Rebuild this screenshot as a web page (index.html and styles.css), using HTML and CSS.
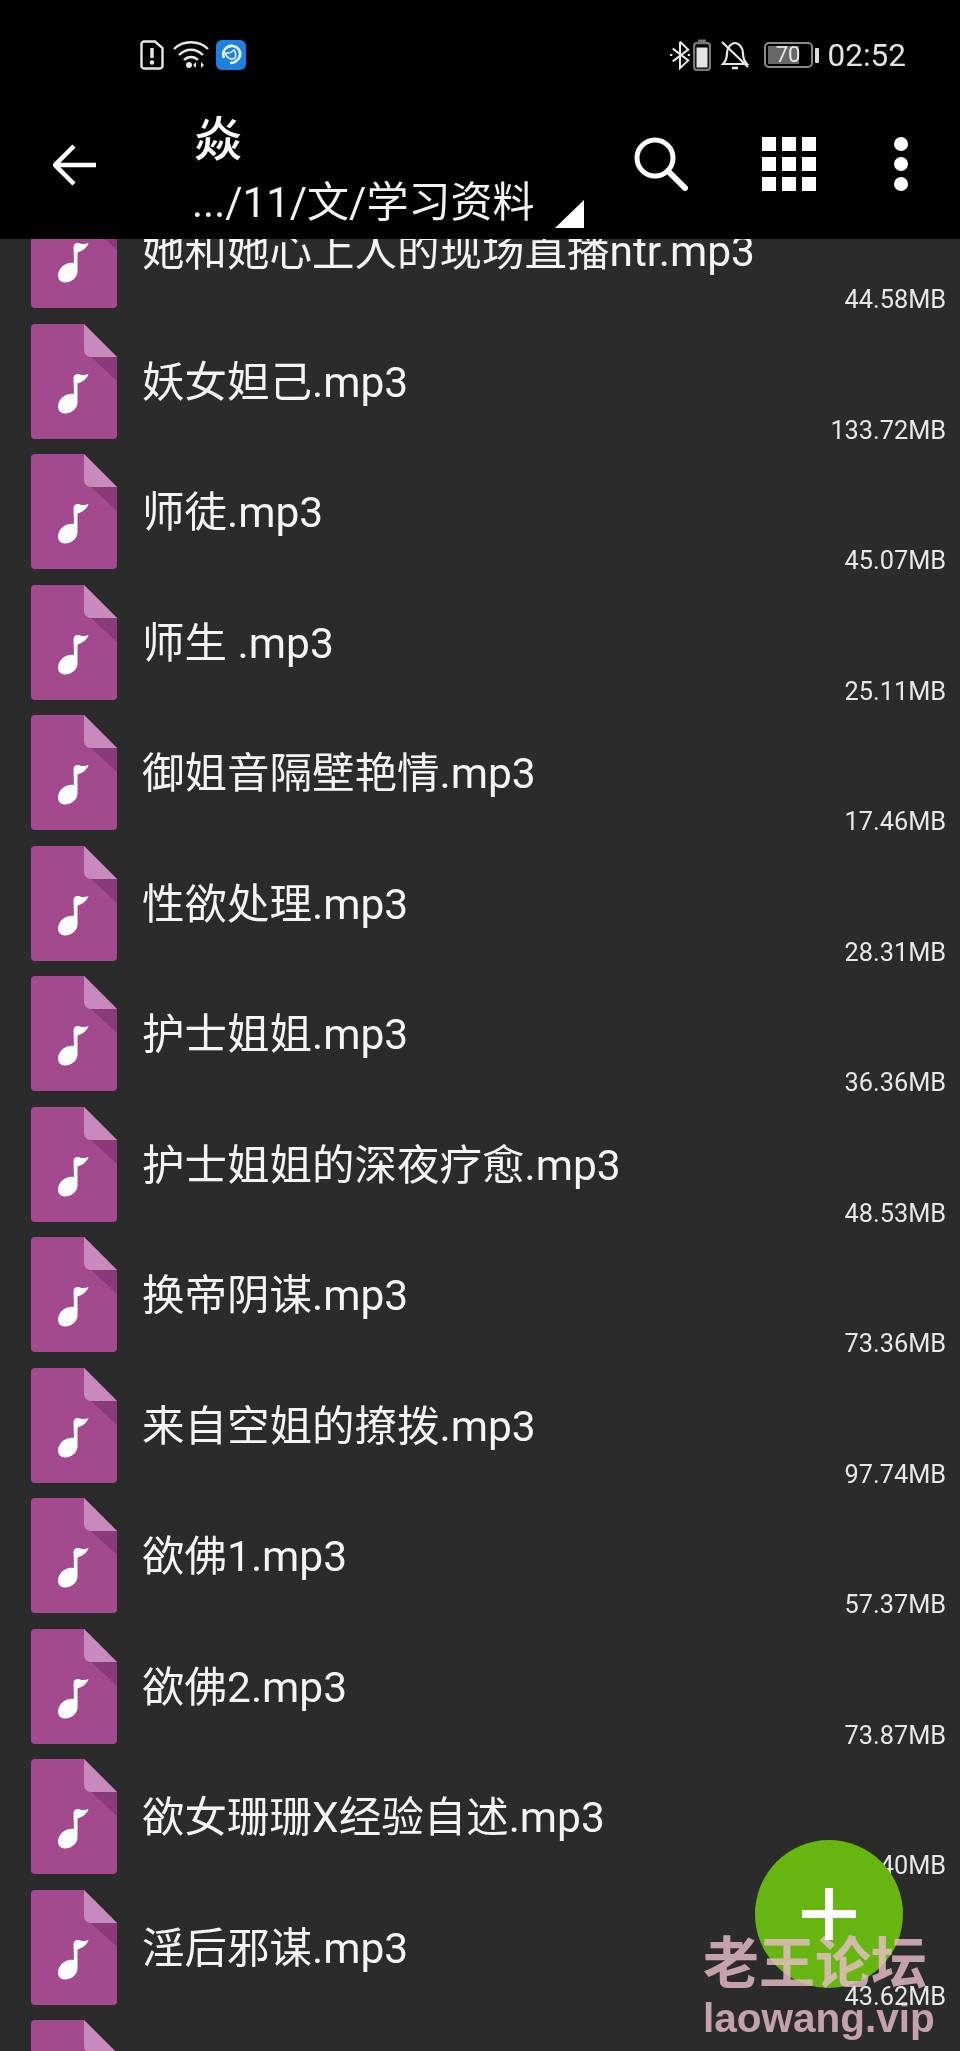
FILE: index.html
```html
<!DOCTYPE html>
<html lang="zh">
<head>
<meta charset="utf-8">
<title>学习资料</title>
<link rel="stylesheet" href="styles.css">
</head>
<body>
<svg class="defs" width="0" height="0" aria-hidden="true">
  <symbol id="music" viewBox="0 0 86 115">
    <path d="M4 0H53L86 33V111a4 4 0 0 1-4 4H4a4 4 0 0 1-4-4V4a4 4 0 0 1 4-4Z" fill="#a34a8f"/>
    <path d="M60 33H86V57Z" fill="#8a3a78"/>
    <path d="M53 0L86 33H60a7 7 0 0 1-7-7Z" fill="#c88abc"/>
    <path d="M42.500 54C43 50 46 49.500 49 50.500C52 51.500 55 51 57.500 50C56 54.500 52 58 46.500 59.500L46.500 79C46 85 40 89.500 34 89.500C29.500 89.500 27 86.500 27 82.500C27 75 35 68.500 43 70Z" fill="#fff"/>
  </symbol>
</svg>
<div class="app">
  <header class="appbar">
    <div class="status">
      <div class="status-left">
        <svg class="ic-sim" viewBox="0 0 24 30"><path d="M4 1.500H15L22.500 8V26a2.500 2.500 0 0 1-2.500 2.500H4A2.500 2.500 0 0 1 1.500 26V4A2.500 2.500 0 0 1 4 1.500Z" fill="none" stroke="#e8e8e8" stroke-width="2.400"/><path d="M12 8v10" stroke="#e8e8e8" stroke-width="3.400"/><circle cx="12" cy="22.500" r="2.200" fill="#e8e8e8"/></svg>
        <svg class="ic-wifi" viewBox="0 0 36 30"><g fill="none" stroke="#e8e8e8" stroke-width="2.400"><path d="M1 9C10 0 26 0 35 9"/><path d="M6 15C13 8 23 8 30 15"/><path d="M11 20C15 16 21 16 25 20"/></g><circle cx="16" cy="25" r="3" fill="#e8e8e8"/><path d="M23 22l-3 3 3 3ZM28 22l3 3-3 3Z" fill="#e8e8e8"/></svg>
        <svg class="ic-app" viewBox="0 0 30 30"><rect width="30" height="30" rx="6" fill="#1f80de"/><path d="M8 18c-3-7 3-13 9-12 6 1 9 7 6 12-2 3-5 5-9 5" fill="none" stroke="#e4f2ff" stroke-width="2.600"/><path d="M9 13c4 1 7-1 9-3 2 3 2 6 1 8-3 2-8 1-10-5Z" fill="#1f80de" stroke="#e4f2ff" stroke-width="1.600"/></svg>
      </div>
      <div class="status-right">
        <svg class="ic-bt" viewBox="0 0 22 32"><path d="M11 1.500V30.500L20 22 3 9M11 1.500L20 10 3 23" fill="none" stroke="#e8e8e8" stroke-width="2.200"/><path d="M0 16h2.500M19.500 16H22" stroke="#e8e8e8" stroke-width="2"/></svg>
        <svg class="ic-batt" viewBox="0 0 18 32"><rect x="1" y="4" width="16" height="27" rx="3" fill="none" stroke="#777" stroke-width="2.400"/><rect x="5" y="0.500" width="8" height="4" fill="#777"/><rect x="3.500" y="8.500" width="11" height="20" fill="#e4e4e4"/></svg>
        <svg class="ic-bell" viewBox="0 0 28 30"><path d="M2 24c3-3 4-6 4-11 0-5 4-10 8-10s8 5 8 10c0 5 1 8 4 11Z" fill="none" stroke="#e8e8e8" stroke-width="2.200"/><path d="M11 28h6" stroke="#e8e8e8" stroke-width="2.500"/><path d="M1 2L27 27" stroke="#e8e8e8" stroke-width="2.200"/></svg>
        <div class="batt">
          <div class="batt-box"><span class="batt-fill"></span><span class="batt-num">70</span></div>
          <span class="batt-tip"></span>
        </div>
        <span class="clock">02:52</span>
      </div>
    </div>
    <div class="toolbar">
      <svg class="ic-back" viewBox="0 0 44 42"><path d="M21 2L2 21 21 40M2 21H43" fill="none" stroke="#fff" stroke-width="4.500"/></svg>
      <div class="titles">
        <div class="title">焱</div>
        <div class="crumb">.../11/文/学习资料</div>
        <span class="corner"></span>
      </div>
      <div class="actions">
        <svg class="ic-search" viewBox="0 0 54 54"><circle cx="21" cy="21" r="18" fill="none" stroke="#fff" stroke-width="5"/><path d="M34 34L51 51" stroke="#fff" stroke-width="6" stroke-linecap="round"/></svg>
        <div class="grid-ic"><i></i><i></i><i></i><i></i><i></i><i></i><i></i><i></i><i></i></div>
        <div class="dots"><i></i><i></i><i></i></div>
      </div>
    </div>
  </header>
  <main class="list">
    <div class="rows">
      <div class="row"><svg class="file"><use href="#music"/></svg><div class="info"><div class="name">她和她心上人的现场直播ntr.mp3</div><div class="size">44.58MB</div></div></div>
      <div class="row"><svg class="file"><use href="#music"/></svg><div class="info"><div class="name">妖女妲己.mp3</div><div class="size">133.72MB</div></div></div>
      <div class="row"><svg class="file"><use href="#music"/></svg><div class="info"><div class="name">师徒.mp3</div><div class="size">45.07MB</div></div></div>
      <div class="row"><svg class="file"><use href="#music"/></svg><div class="info"><div class="name">师生 .mp3</div><div class="size">25.11MB</div></div></div>
      <div class="row"><svg class="file"><use href="#music"/></svg><div class="info"><div class="name">御姐音隔壁艳情.mp3</div><div class="size">17.46MB</div></div></div>
      <div class="row"><svg class="file"><use href="#music"/></svg><div class="info"><div class="name">性欲处理.mp3</div><div class="size">28.31MB</div></div></div>
      <div class="row"><svg class="file"><use href="#music"/></svg><div class="info"><div class="name">护士姐姐.mp3</div><div class="size">36.36MB</div></div></div>
      <div class="row"><svg class="file"><use href="#music"/></svg><div class="info"><div class="name">护士姐姐的深夜疗愈.mp3</div><div class="size">48.53MB</div></div></div>
      <div class="row"><svg class="file"><use href="#music"/></svg><div class="info"><div class="name">换帝阴谋.mp3</div><div class="size">73.36MB</div></div></div>
      <div class="row"><svg class="file"><use href="#music"/></svg><div class="info"><div class="name">来自空姐的撩拨.mp3</div><div class="size">97.74MB</div></div></div>
      <div class="row"><svg class="file"><use href="#music"/></svg><div class="info"><div class="name">欲佛1.mp3</div><div class="size">57.37MB</div></div></div>
      <div class="row"><svg class="file"><use href="#music"/></svg><div class="info"><div class="name">欲佛2.mp3</div><div class="size">73.87MB</div></div></div>
      <div class="row"><svg class="file"><use href="#music"/></svg><div class="info"><div class="name">欲女珊珊X经验自述.mp3</div><div class="size">43.40MB</div></div></div>
      <div class="row"><svg class="file"><use href="#music"/></svg><div class="info"><div class="name">淫后邪谋.mp3</div><div class="size">43.62MB</div></div></div>
      <div class="row"><svg class="file"><use href="#music"/></svg><div class="info"></div></div>
    </div>
  </main>
  <button class="fab" aria-label="新建"><span class="plus"></span></button>
  <div class="watermark">
    <div class="wm-cn">老王论坛</div>
    <div class="wm-en">laowang.vip</div>
  </div>
</div>
</body>
</html>
```
FILE: styles.css
```css
* { box-sizing: border-box; }
html, body { margin: 0; padding: 0; background: #2b2b2b; }
body { font-family: Roboto, "Noto Sans CJK SC", sans-serif; color: #f2f2f2; }
.defs { position: absolute; }
.app { position: relative; width: 960px; height: 2051px; display: flex; flex-direction: column; overflow: hidden; }

.appbar { height: 239px; flex: none; background: #000; display: flex; flex-direction: column; position: relative; z-index: 1; }
.status { height: 107px; padding: 40px 54px 0 140px; display: flex; justify-content: space-between; align-items: flex-start; }
.status-left, .status-right { display: flex; align-items: center; height: 30px; }
.ic-sim { width: 24px; height: 30px; margin-right: 9px; }
.ic-wifi { width: 36px; height: 30px; margin-right: 7px; }
.ic-app { width: 30px; height: 30px; }
.ic-bt { width: 20px; height: 30px; margin-right: 3px; }
.ic-batt { width: 18px; height: 32px; margin-right: 10px; }
.ic-bell { width: 28px; height: 30px; margin-right: 15px; }
.batt { display: flex; align-items: center; margin-right: 9px; }
.batt-box { position: relative; width: 49px; height: 26px; border: 2px solid #8a8a8a; border-radius: 5px; overflow: hidden; }
.batt-fill { position: absolute; left: 2px; top: 2px; bottom: 2px; width: 31px; background: #686868; }
.batt-num { position: relative; display: block; text-align: center; font-size: 22px; line-height: 22px; color: #e8e8e8; }
.batt-tip { width: 4px; height: 15px; margin-left: 2px; background: #dcdcdc; border-radius: 1px; }
.clock { font-size: 31.500px; line-height: 30px; margin-top: 2px; color: #e4e4e4; }

.toolbar { flex: 1; display: flex; align-items: flex-start; padding-left: 53px; }
.ic-back { width: 44px; height: 42px; margin-top: 37px; flex: none; }
.titles { position: relative; width: 394px; margin-left: 95px; }
.title { font-size: 48px; line-height: 56px; margin-top: 5px; padding-left: 2px; color: #fff; font-weight: 500; }
.crumb { font-size: 42px; line-height: 50px; margin-top: 10px; color: #f2f2f2; white-space: nowrap; }
.corner { position: absolute; right: 2px; top: 93px; width: 29px; height: 28px; background: #fff; clip-path: polygon(100% 0, 100% 100%, 0 100%); }
.actions { display: flex; align-items: flex-start; margin-left: 48px; margin-top: 30px; }
.ic-search { width: 54px; height: 54px; flex: none; }
.grid-ic { width: 55px; height: 55px; margin-left: 74px; display: grid; grid-template-columns: repeat(3, 14px); grid-template-rows: repeat(3, 14px); gap: 6px; flex: none; }
.grid-ic i { background: #fff; }
.dots { margin-left: 77px; width: 14px; display: flex; flex-direction: column; gap: 6px; flex: none; }
.dots i { width: 14px; height: 14px; border-radius: 50%; background: #fff; }

.list { flex: 1; overflow: hidden; }
.rows { margin-top: -54px; }
.row { height: 130.500px; display: flex; padding-left: 31px; }
.file { width: 86px; height: 115px; margin-top: 8px; flex: none; }
.info { flex: 1; padding: 42px 14px 0 25px; display: flex; flex-direction: column; min-width: 0; }
.name { font-size: 42.500px; line-height: 50px; white-space: nowrap; color: #f4f4f4; }
.size { font-size: 25.300px; line-height: 30px; margin-top: 8px; text-align: right; color: #e8e8e8; }

.fab { position: absolute; left: 755px; top: 1840px; width: 148px; height: 148px; border: 0; padding: 0; border-radius: 50%; background: #67b511; display: flex; align-items: center; justify-content: center; }
.plus { position: relative; width: 54px; height: 52px; }
.plus::before { content: ""; position: absolute; left: 0; right: 0; top: 22px; height: 8px; background: #fff; }
.plus::after { content: ""; position: absolute; top: 0; bottom: 0; left: 23px; width: 8px; background: #fff; }

.watermark { position: absolute; left: 703px; top: 1924px; width: 236px; color: #e8bcc6; opacity: 0.82; mix-blend-mode: lighten; font-family: "Noto Sans CJK SC", sans-serif; font-weight: 700; }
.wm-cn { font-size: 56px; line-height: 70px; white-space: nowrap; }
.wm-en { font-family: "Liberation Sans", sans-serif; font-size: 40.500px; line-height: 44px; margin-top: 2px; white-space: nowrap; }
```
